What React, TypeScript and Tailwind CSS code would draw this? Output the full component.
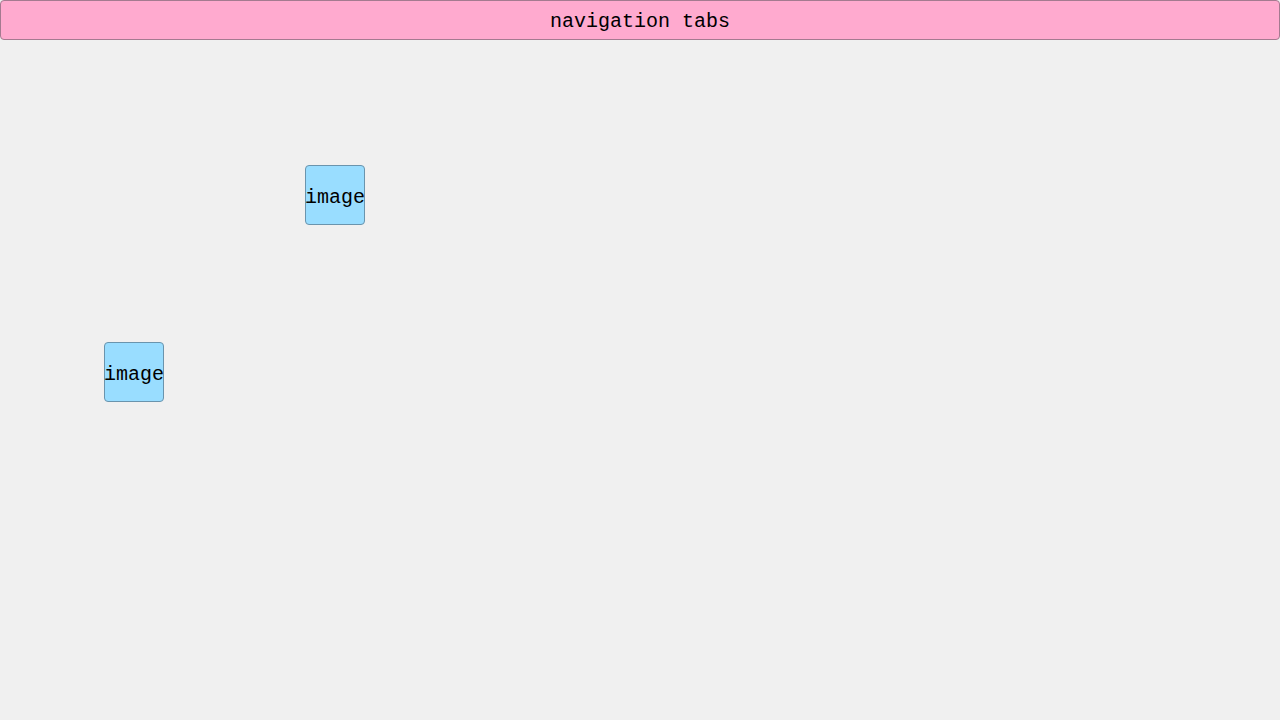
import React from 'react'

const ImageBox = ({ className }: { className: string }) => {
    return (
        <div
            className={
                'w-[60px] h-[60px] flex items-center justify-center pt-[5px] rounded-[4px] border border-[#6a94ad] bg-[#99ddff] text-[20px] text-black ' +
                className
            }
        >
            image
        </div>
    )
}

const App = () => {
    return (
        <div
            className="w-[1280px] h-[720px] bg-[#f0f0f0] flex flex-col overflow-hidden"
            style={{ fontFamily: '"Liberation Mono", "DejaVu Sans Mono", monospace' }}
        >
            <div className="h-[40px] w-full flex items-center justify-center pt-[4px] rounded-[4px] border border-[#a57a90] bg-[#ffaacf] text-[20px] text-black">
                navigation tabs
            </div>
            <ImageBox className="mt-[125px] ml-[305px]" />
            <ImageBox className="mt-[117px] ml-[104px]" />
        </div>
    )
}

export default App
